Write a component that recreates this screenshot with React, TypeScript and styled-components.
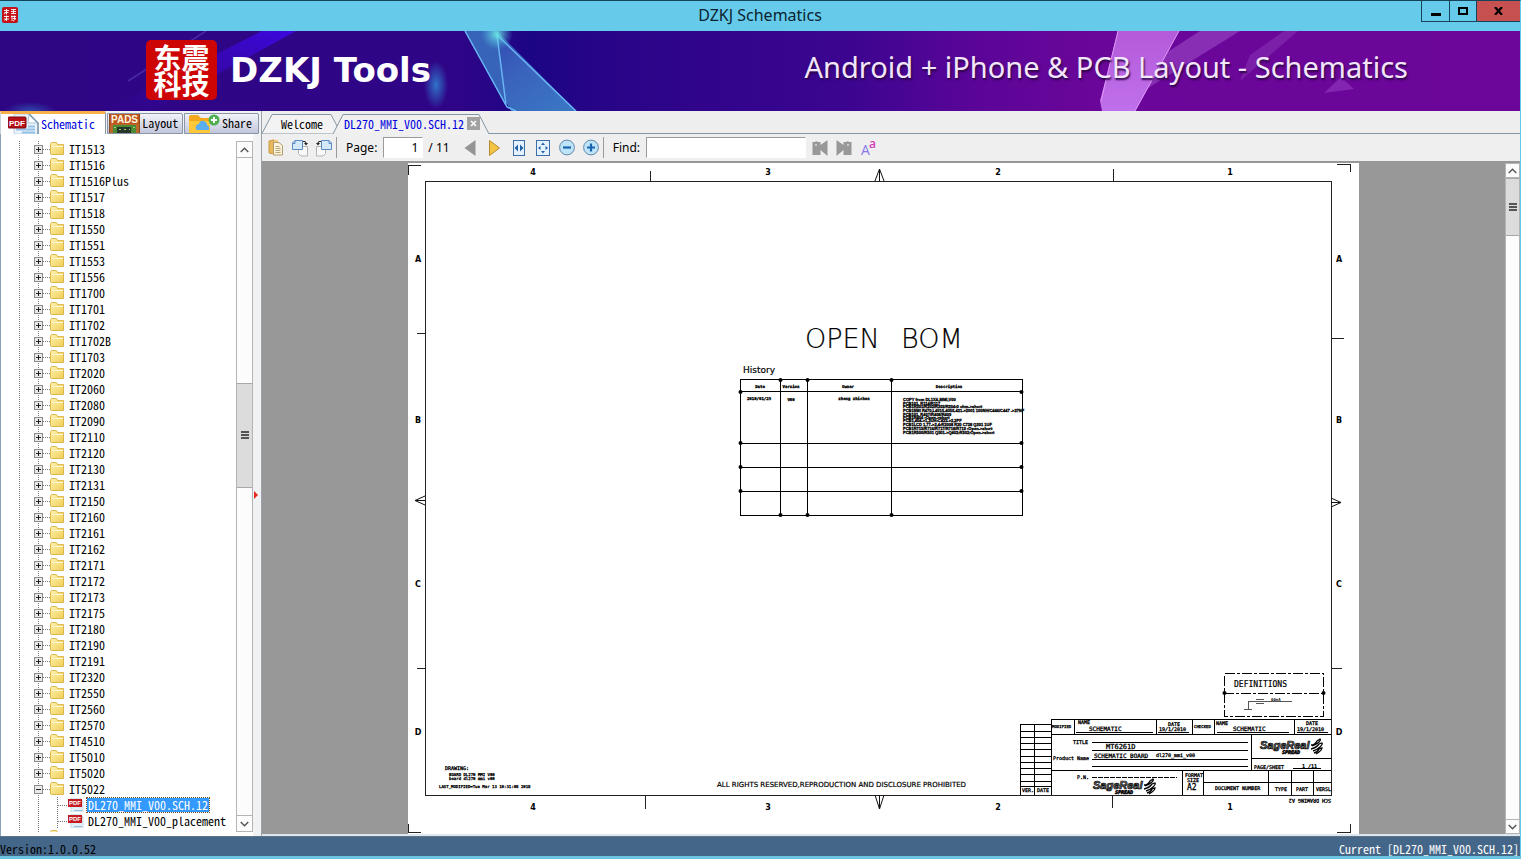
import React from "react";
import styled, { createGlobalStyle } from "styled-components";

const mono = `"Noto Sans Mono CJK SC", "Liberation Mono", monospace`;
const sans = `"Noto Sans", "Open Sans", sans-serif`;

const GlobalStyle = createGlobalStyle`
  * { box-sizing: border-box; }
  body { margin: 0; background: #eee; color: #000; font-family: ${sans}; }
  button { font: inherit; color: inherit; padding: 0; border: 0; background: none; cursor: default; }
  input { border-radius: 0; outline: none; }
  svg { display: block; flex: none; }
`;

const Window = styled.div`
  height: 100vh;
  min-height: 480px;
  display: flex;
  flex-direction: column;
  overflow: hidden;
  border-top: 1px solid #17435a;
  border-right: 1px solid #64c8e8;
  border-bottom: 3px solid #6cc5e0;
`;

const TitleBar = styled.header`
  height: 30px;
  flex: none;
  display: grid;
  grid-template-columns: 1fr auto 1fr;
  align-items: start;
  background: #66cbea;
`;
const AppIcon = styled.div`
  padding: 6px 2px;
`;
const Title = styled.h1`
  margin: 0;
  font-size: 16px;
  line-height: 28px;
  font-weight: 400;
  color: #0b2430;
`;
const WindowButtons = styled.div`
  justify-self: end;
  display: flex;
  height: 21px;
  border: 1px solid #17435a;
  border-width: 0 0 1px 1px;
`;
const WindowButton = styled.button<{ $w: number; $close?: boolean }>`
  width: ${(p) => p.$w}px;
  display: grid;
  place-items: center;
  background: ${(p) => (p.$close ? "#c75050" : "transparent")};
  & + & { border-left: 1px solid #17435a; }
`;

const Banner = styled.div`
  position: relative;
  height: 80px;
  flex: none;
  display: flex;
  align-items: flex-start;
  justify-content: space-between;
  padding: 0 112px 0 146px;
  color: #fff;
  overflow: hidden;
  background: linear-gradient(90deg, #2e0684 0, #2f0587 30%, #1c0584 35%, #2a0588 41%, #3c0590 56%, #5a0598 64%, #6a0699 72%, #6c069a 100%);
`;
const BannerArt = styled.svg`
  position: absolute;
  inset: 0;
`;
const Brand = styled.div`
  position: relative;
  display: flex;
  align-items: center;
  gap: 13px;
  font-family: "DejaVu Sans", sans-serif;
  font-size: 34px;
  font-weight: 700;
  line-height: 78px;
`;
const Seal = styled.div`
  width: 71px;
  height: 60px;
  border-radius: 5px;
  background: #cd0505;
  display: flex;
  flex-direction: column;
  align-items: center;
  justify-content: center;
  font: 700 28px/26px "Noto Sans CJK SC", sans-serif;
`;
const Tagline = styled.div`
  position: relative;
  font-size: 29px;
  line-height: 72px;
  white-space: nowrap;
  color: #f3e6fb;
  text-shadow: 1px 2px 2px #2b0545;
`;

const Main = styled.main`
  flex: 1;
  min-height: 0;
  display: flex;
`;
const Sidebar = styled.aside`
  width: 261px;
  flex: none;
  display: flex;
  flex-direction: column;
  background: #f0f1f4;
  font: 12px/16px ${mono};
`;
const SideTabs = styled.div`
  height: 23px;
  flex: none;
  display: flex;
  align-items: flex-end;
  gap: 1px;
  padding-right: 2px;
`;
const SideTab = styled.button<{ $active?: boolean; $grow: number; $pad: number }>`
  height: ${(p) => (p.$active ? 23 : 21)}px;
  flex: ${(p) => p.$grow} 1 0;
  min-width: 0;
  display: flex;
  align-items: center;
  gap: 2px;
  padding: 0 0 1px ${(p) => p.$pad}px;
  overflow: hidden;
  white-space: nowrap;
  color: ${(p) => (p.$active ? "#0000dd" : "#000")};
  background: ${(p) => (p.$active ? "#fff" : "linear-gradient(#f2f3f8, #c3c7dc)")};
  border: 1px solid #8a96a8;
  border-top: ${(p) => (p.$active ? "3px solid #f5b04a" : "1px solid #8a96a8")};
  border-bottom: ${(p) => (p.$active ? "0" : "1px solid #8a96a8")};
  border-left-color: ${(p) => (p.$active ? "#c8d4e0" : "#8a96a8")};
  border-radius: 0 2px 0 0;
`;
const SideBody = styled.div`
  flex: 1;
  min-height: 0;
  display: flex;
  border-left: 1px solid #8aa0b4;
  padding: 7px 0 4px;
  background: #fff;
`;
const Tree = styled.ul`
  flex: 1;
  margin: 0;
  padding: 0 0 0 18px;
  list-style: none;
  overflow: hidden;
  background: linear-gradient(#777 50%, transparent 50%) 18px 0 / 1px 2px repeat-y;
`;
const TreeRow = styled.li`
  height: 16px;
  display: flex;
  align-items: center;
  padding-left: 15px;
  white-space: nowrap;
  background: linear-gradient(#777 50%, transparent 50%) 19px 0 / 1px 2px repeat-y;
`;
const Expander = styled.button`
  width: 9px;
  height: 9px;
  flex: none;
  display: grid;
  place-items: center;
  border: 1px solid #8a8a8a;
  background: #e9e9e9;
`;
const Dots = styled.span<{ $w: number }>`
  width: ${(p) => p.$w}px;
  height: 1px;
  background: repeating-linear-gradient(90deg, #777 0 1px, transparent 1px 2px);
`;
const ChildLine = styled.span`
  align-self: stretch;
  width: 1px;
  margin-left: 23px;
  background: repeating-linear-gradient(#777 0 1px, transparent 1px 2px);
`;
const RowLabel = styled.span<{ $selected?: boolean }>`
  margin-left: 3px;
  padding: 0 1px;
  line-height: ${(p) => (p.$selected ? 14 : 16)}px;
  color: ${(p) => (p.$selected ? "#fff" : "#000")};
  background: ${(p) => (p.$selected ? "#3399ff" : "none")};
  outline: ${(p) => (p.$selected ? "1px dotted #7a4a10" : "0")};
`;
const ScrollTrack = styled.div<{ $w: number }>`
  width: ${(p) => p.$w}px;
  flex: none;
  display: flex;
  flex-direction: column;
  background: #fcfcfc;
  border: 1px solid #b4b4b4;
  border-width: 0 1px;
`;
const ScrollArrow = styled.button<{ $h: number }>`
  height: ${(p) => p.$h}px;
  flex: none;
  display: grid;
  place-items: center;
  border: 1px solid #b4b4b4;
  border-width: 1px 0;
`;
const ScrollSpace = styled.div<{ $grow: number }>`
  flex: ${(p) => p.$grow} 1 0;
`;
const ScrollThumb = styled.div<{ $grow: number }>`
  flex: ${(p) => p.$grow} 1 0;
  display: grid;
  place-items: center;
  background: #dcdcdc;
  border: 1px solid #a8a8a8;
  border-width: 1px 0;
`;
const Splitter = styled.div`
  width: 8px;
  flex: none;
  margin: -7px 0 -4px;
  display: flex;
  align-items: center;
  background: #f1f2f4;
  padding: 20px 0 0 1px;
`;

const Workspace = styled.section`
  flex: 1;
  min-width: 0;
  display: flex;
  flex-direction: column;
  border-left: 1px solid #9aa2ac;
`;
const DocTabs = styled.div`
  height: 23px;
  flex: none;
  display: flex;
  align-items: flex-end;
  background: linear-gradient(#8596a4, #8596a4) bottom / 100% 1px no-repeat #eeeeee;
  font: 12px/16px ${mono};
`;
const DocTab = styled.div<{ $w: number; $active?: boolean }>`
  position: relative;
  width: ${(p) => p.$w}px;
  height: 20px;
  flex: none;
  display: flex;
  align-items: center;
  padding: 0 0 1px ${(p) => (p.$active ? 11 : 19)}px;
  gap: 3px;
  color: ${(p) => (p.$active ? "#0000dd" : "#000")};
`;
const TabOutline = styled.svg`
  position: absolute;
  left: 0;
  top: 0;
`;
const TabLabel = styled.button`
  position: relative;
`;
const TabClose = styled.button`
  position: relative;
  width: 13px;
  height: 13px;
  display: grid;
  place-items: center;
  background: #a2a2a2;
`;
const Toolbar = styled.div`
  height: 29px;
  flex: none;
  display: flex;
  align-items: center;
  padding-left: 6px;
  gap: 8px;
  background: #efeff0;
  border-bottom: 2px solid #979797;
  font-size: 12px;
  line-height: 20px;
`;
const ToolButton = styled.button`
  width: 16px;
  height: 20px;
  display: grid;
  place-items: center;
  flex: none;
`;
const ToolRule = styled.span`
  width: 1px;
  height: 21px;
  margin: 0 1px 0 -4px;
  background: #9a9a9a;
`;
const Field = styled.input<{ $w: number }>`
  width: ${(p) => p.$w}px;
  height: 21px;
  margin: 0 -2px;
  padding: 0 4px 0 2px;
  border: 1px solid #9a9a9a;
  border-right-color: #fff;
  border-bottom-color: #fff;
  background: #fff;
  font: 12px/18px ${sans};
  text-align: right;
`;
const PageCount = styled.span`
  margin: 0 5px 0 -1px;
`;

const Viewer = styled.div`
  flex: 1;
  min-height: 0;
  display: flex;
  background: #989898;
  border-bottom: 2px solid #dfe6ee;
`;
const Canvas = styled.div`
  flex: 1;
  min-width: 0;
  display: flex;
  justify-content: center;
  overflow: hidden;
`;
const Sheet = styled.svg`
  background: #fff;
  height: 100%;
  font-family: "DejaVu Sans Mono", monospace;
`;

const StatusBar = styled.footer`
  height: 20px;
  flex: none;
  display: flex;
  align-items: flex-end;
  justify-content: space-between;
  padding: 0 1px 0 0;
  background: #446688;
  border-top: 1px solid #5f7385;
  font: 12px/14px ${mono};
  color: #000;
`;
const StatusRight = styled.span`
  color: #fff;
`;

const Grip = () => (
  <svg width="8" height="8" shapeRendering="crispEdges">
    <path d="M0 .5h8M0 3.5h8M0 6.5h8" stroke="#555" strokeWidth="2" />
  </svg>
);
const Chevron = ({ down }: { down?: boolean }) => (
  <svg width="9" height="6" viewBox="0 0 9 6">
    <path d={down ? "M.7 .9 4.5 4.7 8.3 .9" : "M.7 5 4.5 1.2 8.3 5"} fill="none" stroke="#555" strokeWidth="1.4" />
  </svg>
);

const FolderIcon = () => (
  <svg width="15" height="14" viewBox="0 0 15 14">
    <defs>
      <linearGradient id="fold" x1="0" y1="0" x2="1" y2="1">
        <stop offset="0" stopColor="#fff3b0" />
        <stop offset="1" stopColor="#f0cf58" />
      </linearGradient>
    </defs>
    <path d="M.5 12V2L1.5 .5H6.5L7.5 2.500H13.5V12.5H1.5Z" fill="url(#fold)" stroke="#dcb94e" />
    <path d="M1.5 4.5H13" stroke="#fff8d0" />
  </svg>
);

const PdfIcon = ({ big }: { big?: boolean }) => (
  <svg width={big ? 31 : 16} height={big ? 20 : 14} viewBox={big ? "0 0 31 20" : "0 0 16 14"}>
    {big ? (
      <>
        <path d="M6 0H21L30 9V20H6Z" fill="#eaf3fa" stroke="#c2d4e2" />
        <path d="M21 0 30 9V20" fill="none" stroke="#7793a8" strokeWidth="1.5" />
        <path d="M21 1 20 9 29 9Z" fill="#fff" stroke="#a9c3d8" />
        <path d="M8 15.5H27M14 18.5H27M20 12.5H27" stroke="#94c2e6" strokeWidth="2" />
        <rect x="0" y="3" width="18" height="11" rx="1" fill="#b80f18" stroke="#7c0a10" />
        <text x="1" y="12" fontSize="8" fontWeight="700" fill="#fff" fontFamily="Liberation Sans">PDF</text>
      </>
    ) : (
      <>
        <path d="M3 0H12L15 3V14H3Z" fill="#e4f0f8" stroke="#c8d8e4" />
        <path d="M6 12.5H14" stroke="#94c2e6" />
        <rect x="0" y="1" width="14" height="8" fill="#c41a22" />
        <text x="1" y="7" fontSize="6" fontWeight="700" fill="#fff" fontFamily="Liberation Sans">PDF</text>
      </>
    )}
  </svg>
);

const PadsIcon = () => (
  <svg width="31" height="20" viewBox="0 0 31 20">
    <rect x=".5" y=".5" width="30" height="20" fill="#c0561c" stroke="#8d4a1c" />
    <path d="M1 11H30V20H1Z" fill="#b8682c" />
    <text x="2" y="10" fontSize="10" fontWeight="700" fill="#fff6e0" fontFamily="Liberation Sans">PADS</text>
    <path d="M4 12H27V20H4Z" fill="#4c8a34" />
    <path d="M8 14H22V20H8Z" fill="#26362a" />
    <path d="M10 16.5h2m3 0h2m3 0h1M5 14.5h2m17 0h2" stroke="#9fd070" />
  </svg>
);

const ShareIcon = () => (
  <svg width="32" height="20" viewBox="0 0 32 20">
    <path d="M1 4Q1 2 3 2H10L13 5H20Q22 5 22 7V20H1Z" fill="#f4a91c" />
    <path d="M1 8H22V20H1Z" fill="#ffc83a" />
    <path d="M9 17Q7 16 8 13Q9 11 11 11Q12 7 16 8Q19 9 19 12Q22 13 21 17Z" fill="#58aef0" />
    <circle cx="26" cy="7" r="5.5" fill="#4caf50" />
    <path d="M26 4V10M23 7H29" stroke="#fff" strokeWidth="2" />
  </svg>
);

const TriIcon = ({ on }: { on?: boolean }) => (
  <svg width="13" height="18" viewBox="0 0 13 18">
    {on ? (
      <path d="M1.5 1.5 11.5 9 1.5 16.5Z" fill="#f3c544" stroke="#b98a2a" />
    ) : (
      <path d="M11.5 1 .5 9 11.5 17Z" fill="#949494" />
    )}
  </svg>
);

const ZoomIcon = ({ plus }: { plus?: boolean }) => (
  <svg width="16" height="17" viewBox="0 0 16 17">
    <circle cx="8" cy="8.500" r="7.400" fill="#bfe4fa" stroke="#5e87a8" />
    <path d={plus ? "M4 8.500h8M8 4.500v8" : "M4 8.500h8"} stroke="#1765ad" strokeWidth="2.200" />
  </svg>
);

const FitIcon = ({ page }: { page?: boolean }) => (
  <svg width={page ? 14 : 12} height="16" viewBox={page ? "0 0 14 16" : "0 0 12 16"}>
    <rect x=".5" y=".5" width={page ? 13 : 11} height="15" fill="#e3f2fc" stroke="#3d6fae" />
    {page ? (
      <path d="M7 2.500 9 5h-4zM7 13.500 9 11h-4zM2 8 4.500 6v4zM12 8 9.500 6v4z" fill="#2460a8" />
    ) : (
      <path d="M1.500 8 5 4.500v7zM10.500 8 7 4.500v7z" fill="#2460a8" />
    )}
  </svg>
);

const OpenIcon = () => (
  <svg width="16" height="17" viewBox="0 0 16 17">
    <path d="M1 2 6 .8V15L1 14Z" fill="#e8b85c" stroke="#c79a48" />
    <path d="M6 1H10V4H6Z" fill="#f0c878" />
    <path d="M5.500 3.500H11L14.500 6.500V16H5.500Z" fill="#fbf3dc" stroke="#b39c6c" />
    <path d="M7.500 7.500h4M7.500 9.500h5M7.500 11.500h5M7.500 13.500h5" stroke="#b9a67c" />
  </svg>
);

const RotateIcon = ({ left }: { left?: boolean }) => (
  <svg width="16" height="18" viewBox="0 0 16 18">
    <g transform={left ? "translate(16 0) scale(-1 1)" : undefined}>
      <path d="M6.500 7.500H15.500V17H9L6.500 14.500Z" fill="#f8f8f8" stroke="#b4b4b4" />
      <path d="M3 1.500H10.500V10.500H.5V4Z" fill="#d3e9fa" stroke="#5a8cc0" />
      <path d="M.5 4.500H3V1.500" fill="none" stroke="#5a8cc0" />
      <path d="M11 2.500h1.500q1.500 0 1.500 2" fill="none" stroke="#222" strokeWidth="1.200" />
      <path d="M12 4h4L14 6.500z" fill="#222" />
    </g>
  </svg>
);

const FindIcon = ({ next }: { next?: boolean }) => (
  <svg width="16" height="16" viewBox="0 0 16 16">
    <g transform={next ? "translate(16 0) scale(-1 1)" : undefined} fill="#989898">
      <path d="M.5 2H3L4 1 6 2H8.500V5L15.500 0V16L8.500 10V15H.5Z" />
      <path d="M3 4h2v2H3z" fill="#c9c9c9" />
    </g>
  </svg>
);

const CaseIcon = () => (
  <svg width="18" height="20" viewBox="0 0 18 20">
    <text x="1" y="17" fontSize="14" fill="#8a78e8" fontFamily="Open Sans">A</text>
    <text x="9" y="10" fontSize="12" fontWeight="600" fill="#d63cb4" fontFamily="Open Sans">a</text>
  </svg>
);

const models = [
  "IT1513", "IT1516", "IT1516Plus", "IT1517", "IT1518", "IT1550", "IT1551", "IT1553", "IT1556", "IT1700",
  "IT1701", "IT1702", "IT1702B", "IT1703", "IT2020", "IT2060", "IT2080", "IT2090", "IT2110", "IT2120",
  "IT2130", "IT2131", "IT2150", "IT2160", "IT2161", "IT2162", "IT2171", "IT2172", "IT2173", "IT2175",
  "IT2180", "IT2190", "IT2191", "IT2320", "IT2550", "IT2560", "IT2570", "IT4510", "IT5010", "IT5020",
  "IT5022",
];

const FolderRow = ({ name, open }: { name: string; open?: boolean }) => (
  <TreeRow>
    <Expander aria-label={open ? "Collapse" : "Expand"}>
      <svg width="7" height="7" shapeRendering="crispEdges">
        <path d={open ? "M1 3.500h5" : "M1 3.500h5M3.500 1v5"} stroke="#222" />
      </svg>
    </Expander>
    <Dots $w={7} />
    <FolderIcon />
    <RowLabel>{name}</RowLabel>
  </TreeRow>
);

const FileRow = ({ name, selected }: { name: string; selected?: boolean }) => (
  <TreeRow>
    <ChildLine />
    <Dots $w={10} />
    <PdfIcon />
    <RowLabel $selected={selected}>{name}</RowLabel>
  </TreeRow>
);

const edgeNumbers = [["4", 533], ["3", 768], ["2", 998], ["1", 1230]] as const;
const edgeLetters = [["A", 259], ["B", 420], ["C", 584], ["D", 732]] as const;
const historyLines: [number, string][] = [
  [401, "COPY from DL1XA,MMI,V00"],
  [405, "PCB101, R114/R117"],
  [408, "PCB1R201/R202/R203/R204:0 ohm->short"],
  [412, "PCB1EMI R470,L401/L405/L421->2001 100NH/C446/C447 ->27NF"],
  [416, "PCB101, R407/R408/R409"],
  [419, "PCB1R404 :Open->short"],
  [422, "PCB1,404->1,2UH:C423->2,2PF"],
  [426, "PCB1LCD 1,77->2,4:R2008 R20 C728 Q201 1UF"],
  [430, "PCB1R715/R716/R717/R718/R719 :Open->short"],
  [434, "PCB1R500/R501 Q501->Q402:R502:Open->short"],
];
const historyDots = [
  ...[780, 807, 891].flatMap((x) => [[x, 380], [x, 515]]),
  ...[392, 443, 467, 491].flatMap((y) => [[740, y], [1021, y]]),
];
const blockText: [number, number, number, string][] = [
  [1052, 728, 4, "MODIFIED"], [1078, 724, 5, "NAME"], [1089, 731, 6, "SCHEMATIC"], [1168, 726, 5, "DATE"],
  [1159, 731, 5, "19/1/2010"], [1194, 728, 4, "CHECKED"], [1216, 725, 5, "NAME"], [1233, 731, 6, "SCHEMATIC"],
  [1306, 725, 5, "DATE"], [1297, 731, 5, "19/1/2010"], [1073, 744, 5, "TITLE"], [1106, 749, 7, "MT6261D"],
  [1094, 758, 6, "SCHEMATIC BOARD"], [1156, 757, 5, "dl270_mmi_v00"], [1053, 760, 5, "Product Name"],
  [1077, 779, 5, "P.N."], [1254, 769, 5, "PAGE/SHEET"], [1302, 768, 5, "1 /11"], [1185, 777, 5, "FORMAT"],
  [1187, 782, 5, "SIZE"], [1187, 790, 8, "A2"], [1215, 790, 5, "DOCUMENT NUMBER"], [1275, 791, 5, "TYPE"],
  [1296, 791, 5, "PART"], [1316, 791, 5, "VERSL"], [1022, 792, 5, "VER."], [1037, 792, 5, "DATE"],
  [445, 770, 5, "DRAWING:"], [449, 776, 4, "BOARD DL270 MMI V00"], [449, 780, 4, "board dl270 mmi v00"],
  [439, 788, 4, "LAST_MODIFIED=Tue Mar 13 10:31:08 2018"],
];

const SageLogo = ({ x, y }: { x: number; y: number }) => (
  <g transform={`translate(${x} ${y})`}>
    <text x="0" y="9" fontSize="11" fontWeight="700" fontStyle="italic" fontFamily="Liberation Sans" fill="#777" stroke="#000" strokeWidth=".7">
      SageReal
    </text>
    <text x="22" y="14" fontSize="5" fontWeight="700" fontStyle="italic" stroke="#000" strokeWidth=".5">SPREAD</text>
    <path
      d="M51 5q4 0 6-4l3-2q1 1-1 3t-7 4M51 9q5-1 8-5l3-1q1 1-2 4t-7 4M54 13q4-1 5-4l3-1q0 2-3 4l-3 2"
      fill="none"
      stroke="#000"
      strokeWidth="1.300"
    />
  </g>
);

const Schematic = () => (
  <Sheet width="951" viewBox="408 163 951 671" preserveAspectRatio="xMidYMin meet" role="img" aria-label="Schematic sheet 1">
    <g fill="none" stroke="#222" strokeWidth="1" shapeRendering="crispEdges">
      <path d="M421 165.500H408.500V175M1337 164.500H1350.500V172M1350.500 824V832.500H1337M408.500 824V832.500H421" />
      <rect x="425.500" y="181.500" width="906" height="614" />
      <path d="M650.500 171V181M1113.500 169V181M645.500 795V809M1112.500 795V808" />
      <path d="M417 333.500H425M417 668.500H425M1331 338.500H1344M1331 668.500H1342" />
    </g>
    <g fill="none" stroke="#111" strokeWidth="1">
      <path d="M879.500 169V181M875 181 879.500 169 884 181M879.500 809V795M875 795 879.500 809 884 795" />
      <path d="M415 500.500H425M425 496 415 500.500 425 505M1341 502.500H1331M1331 498 1341 502.500 1331 507" />
    </g>
    <g fontFamily="DejaVu Sans" fontSize="8" fontWeight="700" textAnchor="middle">
      {edgeNumbers.map(([n, x]) => (
        <React.Fragment key={n}>
          <text x={x} y="175">{n}</text>
          <text x={x} y="810">{n}</text>
        </React.Fragment>
      ))}
      {edgeLetters.map(([n, y]) => (
        <React.Fragment key={n}>
          <text x="418" y={y + 3}>{n}</text>
          <text x="1339" y={y + 3}>{n}</text>
        </React.Fragment>
      ))}
    </g>

    <g fontFamily="DejaVu Sans" fontSize="27" fontWeight="200" stroke="#000" strokeWidth=".2">
      <text x="805" y="348">OPEN</text>
      <text x="901" y="348">BOM</text>
    </g>
    <text x="743" y="373" fontFamily="DejaVu Sans" fontSize="9" stroke="#000" strokeWidth=".2">History</text>
    <g fill="none" stroke="#000" shapeRendering="crispEdges">
      <path d="M740.500 379.500H1022.500V515.500H740.500ZM740 391.500H1022M740 443.500H1022M740 467.500H1022M740 491.500H1022M780.500 380V515M807.500 380V515M891.500 380V515" />
    </g>
    {historyDots.map(([x, y]) => (
      <circle key={`${x}-${y}`} cx={x + 0.5} cy={y} r="2" />
    ))}
    <g fontSize="4" fontWeight="700" textAnchor="middle" stroke="#000" strokeWidth=".3">
      <text x="760" y="388">Date</text>
      <text x="791" y="388">Version</text>
      <text x="848" y="388">Owner</text>
      <text x="949" y="388">Description</text>
      <text x="759" y="400">2010/01/25</text>
      <text x="791" y="401">V00</text>
      <text x="854" y="400">zheng zhichen</text>
    </g>
    <g fontFamily="Liberation Sans" fontSize="4" fontWeight="700" stroke="#000" strokeWidth=".3">
      {historyLines.map(([y, line]) => (
        <text key={y} x="903" y={y}>{line}</text>
      ))}
    </g>

    <text x="717" y="787" fontFamily="DejaVu Sans" fontSize="7" stroke="#000" strokeWidth=".2">ALL RIGHTS RESERVED,REPRODUCTION AND DISCLOSURE PROHIBITED</text>

    <g fill="none" stroke="#000" shapeRendering="crispEdges">
      <path d="M1224.500 673.500H1323.500V716.500H1224.500ZM1224 693.500H1323" strokeDasharray="10 2 3 2" />
      <path d="M1244 709.500H1252M1248.500 709V701.500H1292" stroke="#555" />
      <path d="M1256 699.500H1264M1256 703.500H1264" stroke="#555" />
    </g>
    <circle cx="1224.500" cy="693" r="2" />
    <circle cx="1323.500" cy="693" r="2" />
    <text x="1234" y="687" fontSize="8" stroke="#000" strokeWidth=".2">DEFINITIONS</text>
    <text x="1271" y="701" fontSize="4" fontWeight="700">00nA</text>

    <g fill="none" stroke="#000" shapeRendering="crispEdges">
      <path d="M1331 719.500H1051V795M1051 734.500H1331M1051 770.500H1331M1251 758.500H1331M1203 782.500H1331" />
      <path d="M1074.500 719V734M1156.500 719V734M1192.500 719V734M1214.500 719V734M1294.500 719V734" />
      <path d="M1251.500 734V770M1182.500 770V795M1203.500 770V795M1268.500 770V795M1291.500 770V795M1313.500 770V795" />
      <path d="M1076 732.500H1153M1158 732.500H1189M1217 732.500H1289M1297 732.500H1328M1293 768.500H1321" />
      <path d="M1092 742.500H1248M1092 750.500H1248M1092 759.500H1248M1092 766.500H1248" />
      <path d="M1092 777.500H1177" strokeDasharray="5 1" />
      <path d="M1020.500 795V724.500H1051M1034.500 724V795" />
      <path d="M1020 731.500h31M1020 737.500h31M1020 743.500h31M1020 749.500h31M1020 756.500h31M1020 762.500h31M1020 768.500h31M1020 774.500h31M1020 781.500h31M1020 786.500h31" />
    </g>
    <g stroke="#000" strokeWidth=".3">
      {blockText.map(([x, y, size, line]) => (
        <text key={`${x}-${y}`} x={x} y={y} fontSize={size}>{line}</text>
      ))}
      <text x="1331" y="799" fontSize="5" transform="rotate(180 1331 799)">SCH DRAWING A2</text>
    </g>
    <SageLogo x={1260} y={740} />
    <SageLogo x={1093} y={780} />
  </Sheet>
);

export default function App() {
  return (
    <Window>
      <GlobalStyle />
      <TitleBar>
        <AppIcon>
          <svg width="16" height="16" viewBox="0 0 16 16">
            <rect width="16" height="16" rx="2" fill="#c4141a" />
            <path
              d="M2 3.500h5M4.500 2v5.500M2.500 5.500h4M2 7l1.500-1M9 2.500h5M9 4.500h5M9 6.500h5M11.500 2.500v4M2 9.500h5M4.500 8.500v5.500M2 12h5M2.500 13.500l2-2M9 9.500h5M10 8.500v5.500M12.500 8.500v3M11 11.500h3l-3 2.500"
              fill="none"
              stroke="#fff"
              strokeWidth=".9"
            />
          </svg>
        </AppIcon>
        <Title>DZKJ Schematics</Title>
        <WindowButtons>
          <WindowButton $w={27} aria-label="Minimize">
            <svg width="10" height="12"><path d="M0 8h10v3H0z" /></svg>
          </WindowButton>
          <WindowButton $w={27} aria-label="Maximize">
            <svg width="10" height="8"><rect x="1" y="1" width="8" height="6" fill="none" stroke="#000" strokeWidth="2" /></svg>
          </WindowButton>
          <WindowButton $w={44} $close aria-label="Close">
            <svg width="9" height="8" viewBox="0 0 9 8"><path d="M1 0 8 8M8 0 1 8" stroke="#000" strokeWidth="2.200" /></svg>
          </WindowButton>
        </WindowButtons>
      </TitleBar>

      <Banner>
        <BannerArt width="1521" height="80" viewBox="0 0 1521 80">
          <defs>
            <linearGradient id="shard" x1="0" y1="0" x2="1" y2="1">
              <stop offset="0" stopColor="#2c3fae" />
              <stop offset=".5" stopColor="#3a63bc" />
              <stop offset="1" stopColor="#3a78c4" />
            </linearGradient>
            <linearGradient id="beam" x1="0" y1="1" x2="1" y2="0">
              <stop offset="0" stopColor="#3a06b0" stopOpacity="0" />
              <stop offset="1" stopColor="#3c08e0" />
            </linearGradient>
            <linearGradient id="pink" x1="0" y1="0" x2="0" y2="1">
              <stop offset="0" stopColor="#b45ada" />
              <stop offset="1" stopColor="#c070ec" />
            </linearGradient>
            <radialGradient id="glow">
              <stop offset="0" stopColor="#2f7fd0" stopOpacity=".9" />
              <stop offset="1" stopColor="#2f7fd0" stopOpacity="0" />
            </radialGradient>
            <radialGradient id="spark">
              <stop offset="0" stopColor="#6ff0e8" stopOpacity=".9" />
              <stop offset="1" stopColor="#4fc0e0" stopOpacity="0" />
            </radialGradient>
          </defs>
          <path d="M262 0H296L150 80H105Z" fill="url(#beam)" />
          <path d="M206 0 128 50" stroke="#5a3fc0" strokeWidth="1.500" opacity=".6" />
          <ellipse cx="436" cy="54" rx="12" ry="24" fill="url(#glow)" />
          <ellipse cx="30" cy="80" rx="26" ry="9" fill="url(#glow)" opacity=".6" />
          <path d="M465 0H497L576 80H511Z" fill="url(#shard)" />
          <path d="M465 0H497L505 74Z" fill="#3763b8" />
          <path d="M465 0 507 76 516 80M497 4 506 74M497 4 576 80" fill="none" stroke="#69b4f4" strokeWidth="1.500" />
          <circle cx="497" cy="3" r="16" fill="url(#spark)" />
          <path d="M1200 0H1240L1140 62 1138 40Z" fill="#9440c0" opacity=".7" />
          <path d="M1284 0H1298L1240 50 1250 24Z" fill="#8630b4" opacity=".6" />
          <path d="M1118 0H1179L1135 80H1102L1100 70Z" fill="url(#pink)" />
          <path d="M1118 0 1101 70M1179 0 1135 80" stroke="#de9af6" strokeWidth="1" />
          <path d="M1324 62 1341 46 1354 58Z" fill="#8b2db8" opacity=".8" />
        </BannerArt>
        <Brand>
          <Seal>
            <span>东震</span>
            <span>科技</span>
          </Seal>
          DZKJ Tools
        </Brand>
        <Tagline>Android + iPhone &amp; PCB Layout - Schematics</Tagline>
      </Banner>

      <Main>
        <Sidebar>
          <SideTabs>
            <SideTab $active $grow={104} $pad={7}><PdfIcon big />Schematic</SideTab>
            <SideTab $grow={78} $pad={1}><PadsIcon />Layout</SideTab>
            <SideTab $grow={75} $pad={3}><ShareIcon />Share</SideTab>
          </SideTabs>
          <SideBody>
            <Tree>
              {models.map((name) => (
                <FolderRow key={name} name={name} open={name === "IT5022"} />
              ))}
              <FileRow name="DL270_MMI_V00.SCH.12" selected />
              <FileRow name="DL270_MMI_V00_placement" />
              <TreeRow>
                <Dots $w={16} />
                <FolderIcon />
              </TreeRow>
            </Tree>
            <ScrollTrack $w={17}>
              <ScrollArrow $h={17} aria-label="Scroll up"><Chevron /></ScrollArrow>
              <ScrollSpace $grow={225} />
              <ScrollThumb $grow={103}><Grip /></ScrollThumb>
              <ScrollSpace $grow={328} />
              <ScrollArrow $h={17} aria-label="Scroll down"><Chevron down /></ScrollArrow>
            </ScrollTrack>
            <Splitter>
              <svg width="5" height="8"><path d="M0 0 4 4 0 8Z" fill="#e8281c" /></svg>
            </Splitter>
          </SideBody>
        </Sidebar>

        <Workspace>
          <DocTabs>
            <DocTab $w={71}>
              <TabOutline width="82" height="20">
                <path d="M0 19.500 10 .5H69L79 19.500" fill="#f3f3f3" stroke="#8596a4" />
              </TabOutline>
              <TabLabel>Welcome</TabLabel>
            </DocTab>
            <DocTab $w={156} $active>
              <TabOutline width="158" height="20">
                <path d="M0 20 10 .5H146L156 20" fill="#f0f0f0" stroke="#8596a4" />
              </TabOutline>
              <TabLabel>DL270_MMI_V00.SCH.12</TabLabel>
              <TabClose aria-label="Close tab">
                <svg width="7" height="7" viewBox="0 0 7 7"><path d="M1 1 6 6M6 1 1 6" stroke="#fff" strokeWidth="1.500" /></svg>
              </TabClose>
            </DocTab>
          </DocTabs>
          <Toolbar>
            <ToolButton aria-label="Open"><OpenIcon /></ToolButton>
            <ToolButton aria-label="Rotate right"><RotateIcon /></ToolButton>
            <ToolButton aria-label="Rotate left"><RotateIcon left /></ToolButton>
            <ToolRule />
            <label htmlFor="page">Page:</label>
            <Field id="page" $w={40} defaultValue="1" />
            <PageCount>/ 11</PageCount>
            <ToolButton aria-label="Previous page"><TriIcon /></ToolButton>
            <ToolButton aria-label="Next page"><TriIcon on /></ToolButton>
            <ToolButton aria-label="Fit width"><FitIcon /></ToolButton>
            <ToolButton aria-label="Fit page"><FitIcon page /></ToolButton>
            <ToolButton aria-label="Zoom out"><ZoomIcon /></ToolButton>
            <ToolButton aria-label="Zoom in"><ZoomIcon plus /></ToolButton>
            <ToolRule />
            <label htmlFor="find">Find:</label>
            <Field id="find" $w={160} />
            <ToolButton aria-label="Find previous"><FindIcon /></ToolButton>
            <ToolButton aria-label="Find next"><FindIcon next /></ToolButton>
            <ToolButton aria-label="Match case"><CaseIcon /></ToolButton>
          </Toolbar>
          <Viewer>
            <Canvas>
              <Schematic />
            </Canvas>
            <ScrollTrack $w={15}>
              <ScrollArrow $h={15} aria-label="Scroll up"><Chevron /></ScrollArrow>
              <ScrollThumb $grow={56}><Grip /></ScrollThumb>
              <ScrollSpace $grow={584} />
              <ScrollArrow $h={15} aria-label="Scroll down"><Chevron down /></ScrollArrow>
            </ScrollTrack>
          </Viewer>
        </Workspace>
      </Main>

      <StatusBar>
        <span>Version:1.0.0.52</span>
        <StatusRight>Current [DL270_MMI_V00.SCH.12]</StatusRight>
      </StatusBar>
    </Window>
  );
}
